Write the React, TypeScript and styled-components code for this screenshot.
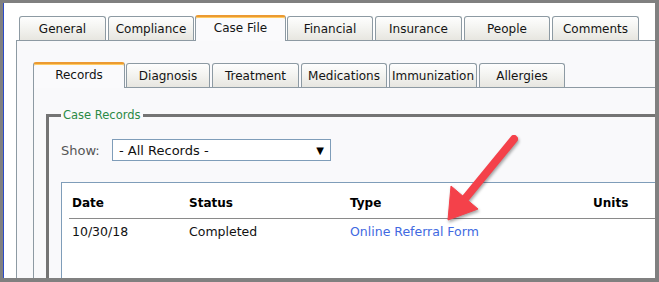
import React from "react";
import styled, { createGlobalStyle, css } from "styled-components";

const GlobalStyle = createGlobalStyle`
  html, body { margin: 0; padding: 0; background: #fff; }
  body { font-family: "DejaVu Sans", Verdana, sans-serif; font-size: 12px; color: #111; }
`;

const Frame = styled.div`
  position: relative;
  width: 659px;
  height: 282px;
  box-sizing: border-box;
  border-style: solid;
  border-color: #808080;
  border-width: 3px 4px 4px 3px;
  overflow: hidden;
  background: #fff;
`;

const Screen = styled.div`
  height: 100%;
  box-sizing: border-box;
  border-left: 1px solid #2b4bc8;
  padding: 12px 0 0 12px;
  display: flex;
  flex-direction: column;
`;

const TabRow = styled.div<{ $pad?: number; $gap?: number }>`
  display: flex;
  align-items: flex-end;
  gap: ${(p) => p.$gap ?? 2}px;
  padding-left: ${(p) => p.$pad ?? 0}px;
  position: relative;
  z-index: 1;
`;

const Tab = styled.div<{ $active?: boolean; $w: number; $ml?: number }>`
  box-sizing: border-box;
  width: ${(p) => p.$w}px;
  height: 24px;
  display: flex;
  align-items: center;
  justify-content: center;
  white-space: nowrap;
  border: 1px solid #8d9aa3;
  border-bottom: none;
  border-radius: 3px 3px 0 0;
  background: linear-gradient(#fefefe, #f4f4f1 45%, #e7e6e0);
  color: #141414;
  font-size: 12px;
  ${(p) =>
    p.$active &&
    css`
      height: 26px;
      margin: 0 -1px -1px ${p.$ml ?? -1}px;
      border-top: 2px solid #eb9a32;
      box-shadow: inset 0 1px 0 #ffcb62;
      background: #fafafc;
      padding-bottom: 2px;
    `}
`;

const Panel = styled.div`
  flex: 1;
  display: flex;
  flex-direction: column;
  background: #f9f9fb;
  border-top: 1px solid #8d9aa3;
  border-left: 1px solid #8d9aa3;
  padding: 21px 0 0 16px;
`;

const InnerPanel = styled.div`
  flex: 1;
  display: flex;
  flex-direction: column;
  border-top: 1px solid #8d9aa3;
  border-left: 1px solid #8d9aa3;
  padding: 20px 0 0 12px;
`;

const Group = styled.fieldset`
  margin: 0;
  min-width: 0;
  flex: 1;
  border: 3px solid #747474;
  border-right: none;
  border-bottom: none;
  padding: 0 0 0 12px;
`;

const Legend = styled.legend`
  padding: 0 2px;
  color: #2b8a46;
  font-size: 11.5px;
  line-height: 15px;
`;

const ShowRow = styled.div`
  display: flex;
  align-items: center;
  margin-top: 16px;
  height: 22px;
  font-size: 13px;
`;

const ShowLabel = styled.span`
  width: 51px;
  color: #555;
`;

const Select = styled.div`
  box-sizing: border-box;
  width: 219px;
  height: 22px;
  border: 1px solid #7f9db9;
  background: #fff;
  display: flex;
  align-items: center;
  justify-content: space-between;
  padding: 0 6px 0 6px;
  color: #111;
`;

const Caret = styled.span`
  font-size: 10px;
  color: #000;
`;

const TableBox = styled.div`
  margin-top: 21px;
  height: 140px;
  border: 1px solid #7f9db9;
  border-right: none;
  background: #fff;
  padding: 6px 0 0 7px;
`;

const Table = styled.table`
  width: 100%;
  border-collapse: separate;
  border-spacing: 0;
  table-layout: fixed;
`;

const Th = styled.th<{ $w?: number }>`
  ${(p) => p.$w && `width: ${p.$w}px;`}
  text-align: left;
  font-weight: bold;
  font-size: 12px;
  line-height: 15px;
  padding: 7px 3px 7px;
  border-bottom: 1px solid #8a8a8a;
  color: #000;
`;

const Td = styled.td`
  font-size: 12.5px;
  line-height: 15px;
  padding: 5px 3px;
  color: #111;
  white-space: nowrap;
`;

const Link = styled.a`
  color: #4169e1;
  text-decoration: none;
`;

const Overlay = styled.svg`
  position: absolute;
  left: -3px;
  top: -3px;
  width: 659px;
  height: 282px;
  pointer-events: none;
  filter: drop-shadow(1px 2px 1.5px rgba(0, 0, 0, 0.35));
`;

const topTabs = [
  { label: "General", w: 87 },
  { label: "Compliance", w: 86 },
  { label: "Case File", w: 91, active: true },
  { label: "Financial", w: 86 },
  { label: "Insurance", w: 87 },
  { label: "People", w: 86 },
  { label: "Comments", w: 87 },
];

const innerTabs = [
  { label: "Records", w: 92, active: true },
  { label: "Diagnosis", w: 84 },
  { label: "Treatment", w: 87 },
  { label: "Medications", w: 86 },
  { label: "Immunization", w: 88 },
  { label: "Allergies", w: 86 },
];

export default function App() {
  return (
    <>
      <GlobalStyle />
      <Frame>
        <Screen>
          <TabRow $pad={3}>
            {topTabs.map((t) => (
              <Tab key={t.label} $w={t.w} $active={t.active}>
                {t.label}
              </Tab>
            ))}
          </TabRow>
          <Panel>
            <TabRow>
              {innerTabs.map((t) => (
                <Tab key={t.label} $w={t.w} $active={t.active} $ml={0}>
                  {t.label}
                </Tab>
              ))}
            </TabRow>
            <InnerPanel>
              <Group>
                <Legend>Case Records</Legend>
                <ShowRow>
                  <ShowLabel>Show:</ShowLabel>
                  <Select>
                    <span>- All Records -</span>
                    <Caret>▼</Caret>
                  </Select>
                </ShowRow>
                <TableBox>
                  <Table>
                    <thead>
                      <tr>
                        <Th $w={111}>Date</Th>
                        <Th $w={155}>Status</Th>
                        <Th $w={237}>Type</Th>
                        <Th>Units</Th>
                      </tr>
                    </thead>
                    <tbody>
                      <tr>
                        <Td>10/30/18</Td>
                        <Td>Completed</Td>
                        <Td>
                          <Link href="#">Online Referral Form</Link>
                        </Td>
                        <Td></Td>
                      </tr>
                    </tbody>
                  </Table>
                </TableBox>
              </Group>
            </InnerPanel>
          </Panel>
        </Screen>
        <Overlay viewBox="0 0 659 282">
          <line x1="514" y1="139" x2="464" y2="200" stroke="#f4414a" strokeWidth="8" strokeLinecap="round" />
          <path d="M448,220 L451,186 L478,209 Z" fill="#f4414a" stroke="#f4414a" strokeWidth="1" strokeLinejoin="round" />
        </Overlay>
      </Frame>
    </>
  );
}
